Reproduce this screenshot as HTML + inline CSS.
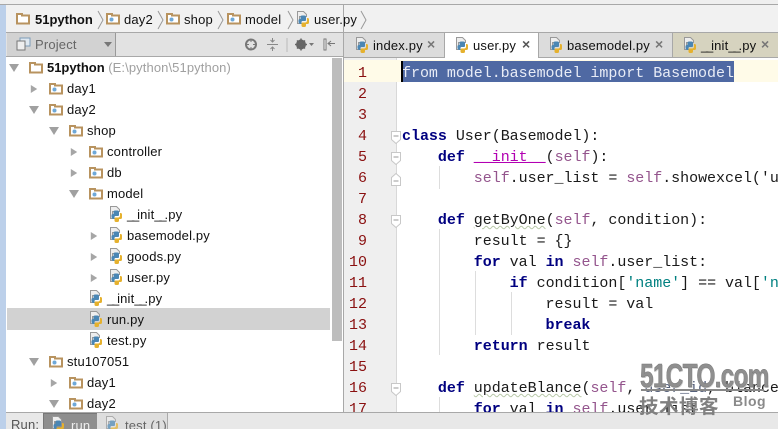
<!DOCTYPE html>
<html><head><meta charset="utf-8"><style>
html,body{margin:0;padding:0;background:#fff}
#p{position:relative;width:778px;height:429px;overflow:hidden;background:#fff;font:13px "Liberation Sans",sans-serif;color:#111;letter-spacing:.17px}
#p div,#p svg{position:absolute}
.t{height:21px;line-height:21px;white-space:nowrap}
.c{position:absolute;left:402px;height:21px;line-height:21px;white-space:pre;font:15px/21px "Liberation Mono",monospace;color:#1a1a1a;letter-spacing:-.03px}
.n{position:absolute;left:344px;width:23px;text-align:right;font:15px/21px "Liberation Mono",monospace;letter-spacing:0;color:#8a1010}
.k{color:#000080;font-weight:bold}
.s{color:#94558d}
.q{color:#008080}
.m{color:#b200b2;text-decoration:underline}
.w{text-decoration:underline wavy #b8c8a8 1px}
.x{color:#777;font-weight:bold;font-size:14px}
.u{letter-spacing:-2.2px}
</style></head><body><div id="p">
<svg width="0" height="0" style="position:absolute"><defs>
<symbol id="py" viewBox="0 0 12 16"><path d="M.5.500h6l3 3v2H2.500v7h-2z" fill="#eee" stroke="#999"/><path d="M3.500 8V6q0-1.500 1.500-1.500h2.500Q9 4.500 9 6v3q0 1-1 1H5.500q-1 0-1 1v2H3q-1.500-.5-1.500-2.500V9.500Q1.500 8 3 8z" fill="#4a86b4"/><path d="M10 7h.5Q12 7 12 8.500v3Q12 13 10.500 13H9v1.500Q9 16 7.500 16H6q-1.500 0-1.500-1.500v-2q0-1 1-1H8q2 0 2-2z" fill="#e5b12e"/></symbol>
<symbol id="fo" viewBox="0 0 14 14"><path d="M1 3h5v1.500h7v8H1z" fill="#fff" stroke="#b8935f" stroke-width="2"/><circle cx="5.500" cy="8.500" r="2" fill="#6ea8d8"/></symbol>
<symbol id="fp" viewBox="0 0 14 14"><path d="M1 3h5v1.500h7v8H1z" fill="#fff" stroke="#b8935f" stroke-width="2"/></symbol>
<symbol id="ar" viewBox="0 0 10 10"><path d="M1 0l8 5-8 5z" fill="#a6a6a6"/></symbol>
<symbol id="ad" viewBox="0 0 10 10"><path d="M0 1h10L5 9z" fill="#a0a0a0"/></symbol>
<symbol id="fd" viewBox="0 0 10 13"><path d="M.5.500h9v8L5 12.500.5 8.500z" fill="#fff" stroke="#c8c8c8"/><path d="M2.500 5h5" stroke="#999"/></symbol>
</defs></svg>

<div style="left:0;top:0;width:778px;height:4px;background:#efefef;border-bottom:1px solid #a8a8a8"></div>
<div style="left:0;top:5px;width:6px;height:424px;background:#bcd0ea"></div>
<div style="left:6px;top:5px;width:772px;height:27px;background:#f1f1f1;border-bottom:1px solid #a8a8a8"></div>

<!-- breadcrumb -->
<svg style="left:16px;top:11px" width="14" height="14"><use href="#fp"/></svg>
<div class="t" style="left:35px;top:9px;font-weight:bold;letter-spacing:0">51python</div>
<svg style="left:97px;top:10px" width="8" height="20"><path d="M1 1l5 9-5 9" fill="none" stroke="#999"/></svg>
<svg style="left:106px;top:11px" width="14" height="14"><use href="#fo"/></svg>
<div class="t" style="left:124px;top:9px">day2</div>
<svg style="left:157px;top:10px" width="8" height="20"><path d="M1 1l5 9-5 9" fill="none" stroke="#999"/></svg>
<svg style="left:166px;top:11px" width="14" height="14"><use href="#fo"/></svg>
<div class="t" style="left:184px;top:9px">shop</div>
<svg style="left:217px;top:10px" width="8" height="20"><path d="M1 1l5 9-5 9" fill="none" stroke="#999"/></svg>
<svg style="left:227px;top:11px" width="14" height="14"><use href="#fo"/></svg>
<div class="t" style="left:245px;top:9px">model</div>
<svg style="left:287px;top:10px" width="8" height="20"><path d="M1 1l5 9-5 9" fill="none" stroke="#999"/></svg>
<svg style="left:297px;top:11px" width="12" height="16"><use href="#py"/></svg>
<div class="t" style="left:314px;top:9px">user.py</div>
<svg style="left:360px;top:10px" width="8" height="20"><path d="M1 1l5 9-5 9" fill="none" stroke="#999"/></svg>

<!-- project toolbar -->
<div style="left:6px;top:33px;width:337px;height:23px;background:#e2e2e2;border-bottom:1px solid #a8a8a8"></div>
<div style="left:7px;top:33px;width:108px;height:23px;background:#d2d2d2;border-right:1px solid #999"></div>
<svg style="left:16px;top:37px" width="15" height="14"><rect x="4" y="1" width="10" height="8" fill="#dfe8f0" stroke="#7c9cb8"/><rect x="1" y="4" width="8" height="9" fill="#eee" stroke="#777"/></svg>
<div class="t" style="left:35px;top:34px;color:#666">Project</div>
<svg style="left:104px;top:42px" width="8" height="5"><path d="M0 0h8L4 5z" fill="#777"/></svg>
<svg style="left:244px;top:37px" width="100" height="16"><circle cx="7" cy="7.500" r="5" fill="none" stroke="#777" stroke-width="2"/><path d="M7 2v3M7 10v3M2 7.500h3M9 7.500h3" stroke="#777"/>
<path d="M23 7.500h11M28.500 1v4M28.500 10v4M26.500 3l2 2 2-2M26.500 12l2-2 2 2" stroke="#888" fill="none"/>
<path d="M43 1v14" stroke="#bbb"/>
<circle cx="57" cy="7.500" r="3.500" fill="none" stroke="#666" stroke-width="3"/><path d="M57 1.500v12M51 7.500h12M53 3.500l8 8M61 3.500l-8 8" stroke="#666" stroke-width="1.500"/><path d="M65 6h5l-2.500 3z" fill="#777"/>
<path d="M80 2h2v11h-2z" fill="#fff" stroke="#777"/><path d="M91 6.500h-7M87 4l-3 2.500 3 2.500" stroke="#777" fill="none"/></svg>

<!-- tree -->
<div style="left:7px;top:308px;width:323px;height:22px;background:#d2d2d2"></div>
<div style="left:332px;top:58px;width:10px;height:283px;background:#bdbdbd"></div>

<svg style="left:9px;top:63px" width="10" height="10"><use href="#ad"/></svg>
<svg style="left:29px;top:60px" width="14" height="14"><use href="#fp"/></svg>
<div class="t" style="left:47px;top:57px;font-weight:bold;letter-spacing:-.02px">51python <span style="font-weight:normal;color:#a0a0a0;letter-spacing:.1px">(E:\python\51python)</span></div>

<svg style="left:30px;top:84px" width="8" height="10"><use href="#ar"/></svg>
<svg style="left:49px;top:81px" width="14" height="14"><use href="#fo"/></svg>
<div class="t" style="left:67px;top:78px">day1</div>

<svg style="left:29px;top:105px" width="10" height="10"><use href="#ad"/></svg>
<svg style="left:49px;top:102px" width="14" height="14"><use href="#fo"/></svg>
<div class="t" style="left:67px;top:99px">day2</div>

<svg style="left:49px;top:126px" width="10" height="10"><use href="#ad"/></svg>
<svg style="left:69px;top:123px" width="14" height="14"><use href="#fo"/></svg>
<div class="t" style="left:87px;top:120px">shop</div>

<svg style="left:70px;top:147px" width="8" height="10"><use href="#ar"/></svg>
<svg style="left:89px;top:144px" width="14" height="14"><use href="#fo"/></svg>
<div class="t" style="left:107px;top:141px">controller</div>

<svg style="left:70px;top:168px" width="8" height="10"><use href="#ar"/></svg>
<svg style="left:89px;top:165px" width="14" height="14"><use href="#fo"/></svg>
<div class="t" style="left:107px;top:162px">db</div>

<svg style="left:69px;top:189px" width="10" height="10"><use href="#ad"/></svg>
<svg style="left:89px;top:186px" width="14" height="14"><use href="#fo"/></svg>
<div class="t" style="left:107px;top:183px">model</div>

<svg style="left:110px;top:206px" width="12" height="16"><use href="#py"/></svg>
<div class="t" style="left:127px;top:204px"><span class="u">__</span>init<span class="u">__</span>.py</div>

<svg style="left:90px;top:231px" width="8" height="10"><use href="#ar"/></svg>
<svg style="left:110px;top:227px" width="12" height="16"><use href="#py"/></svg>
<div class="t" style="left:127px;top:225px">basemodel.py</div>

<svg style="left:90px;top:252px" width="8" height="10"><use href="#ar"/></svg>
<svg style="left:110px;top:248px" width="12" height="16"><use href="#py"/></svg>
<div class="t" style="left:127px;top:246px">goods.py</div>

<svg style="left:90px;top:273px" width="8" height="10"><use href="#ar"/></svg>
<svg style="left:110px;top:269px" width="12" height="16"><use href="#py"/></svg>
<div class="t" style="left:127px;top:267px">user.py</div>

<svg style="left:90px;top:290px" width="12" height="16"><use href="#py"/></svg>
<div class="t" style="left:107px;top:288px"><span class="u">__</span>init<span class="u">__</span>.py</div>

<svg style="left:90px;top:311px" width="12" height="16"><use href="#py"/></svg>
<div class="t" style="left:107px;top:309px">run.py</div>

<svg style="left:90px;top:332px" width="12" height="16"><use href="#py"/></svg>
<div class="t" style="left:107px;top:330px">test.py</div>

<svg style="left:29px;top:357px" width="10" height="10"><use href="#ad"/></svg>
<svg style="left:49px;top:354px" width="14" height="14"><use href="#fo"/></svg>
<div class="t" style="left:67px;top:351px">stu107051</div>

<svg style="left:50px;top:378px" width="8" height="10"><use href="#ar"/></svg>
<svg style="left:69px;top:375px" width="14" height="14"><use href="#fo"/></svg>
<div class="t" style="left:87px;top:372px">day1</div>

<svg style="left:49px;top:399px" width="10" height="10"><use href="#ad"/></svg>
<svg style="left:69px;top:396px" width="14" height="14"><use href="#fo"/></svg>
<div class="t" style="left:87px;top:393px">day2</div>

<!-- tabs -->
<div style="left:344px;top:33px;width:434px;height:24px;background:#dcdcdc;border-bottom:1px solid #a8a8a8"></div>
<div style="left:343px;top:5px;width:1px;height:407px;background:#a8a8a8"></div>
<div style="left:444px;top:33px;width:93px;height:25px;background:#fff;border-left:1px solid #a8a8a8;border-right:1px solid #a8a8a8"></div>
<div style="left:672px;top:33px;width:106px;height:24px;background:#d6d3bf;border-left:1px solid #a8a8a8"></div>
<svg style="left:356px;top:37px" width="12" height="16"><use href="#py"/></svg>
<div class="t" style="left:373px;top:35px">index.py</div>
<div class="t x" style="left:427px;top:34px">×</div>
<svg style="left:456px;top:37px" width="12" height="16"><use href="#py"/></svg>
<div class="t" style="left:473px;top:35px">user.py</div>
<div class="t x" style="left:522px;top:34px;color:#555">×</div>
<svg style="left:550px;top:37px" width="12" height="16"><use href="#py"/></svg>
<div class="t" style="left:567px;top:35px">basemodel.py</div>
<div class="t x" style="left:655px;top:34px">×</div>
<svg style="left:684px;top:37px" width="12" height="16"><use href="#py"/></svg>
<div class="t" style="left:701px;top:35px"><span class="u">__</span>init<span class="u">__</span>.py</div>
<div class="t x" style="left:761px;top:34px">×</div>

<!-- editor -->
<div style="left:344px;top:58px;width:52px;height:354px;background:#efefef;border-right:1px solid #d8d8d8"></div>
<div style="left:344px;top:60px;width:434px;height:22px;background:#fffbe8"></div>
<div style="left:401px;top:61px;width:333px;height:21px;background:#4f69a3"></div>
<div style="left:401px;top:61px;width:2px;height:21px;background:#000"></div>

<div style="left:439px;top:166px;width:1px;height:23px;background:#ddd"></div>
<div style="left:439px;top:229px;width:1px;height:126px;background:#ddd"></div>
<div style="left:475px;top:271px;width:1px;height:64px;background:#ddd"></div>
<div style="left:511px;top:292px;width:1px;height:43px;background:#ddd"></div>
<div style="left:439px;top:397px;width:1px;height:15px;background:#ddd"></div>

<svg style="left:391px;top:131px" width="10" height="13"><use href="#fd"/></svg>
<svg style="left:391px;top:152px" width="10" height="13"><use href="#fd"/></svg>
<svg style="left:391px;top:173px;transform:scaleY(-1)" width="10" height="13"><use href="#fd"/></svg>
<svg style="left:391px;top:215px" width="10" height="13"><use href="#fd"/></svg>
<svg style="left:391px;top:383px" width="10" height="13"><use href="#fd"/></svg>

<span class="n" style="top:63px">1</span><span class="n" style="top:84px">2</span><span class="n" style="top:105px">3</span><span class="n" style="top:126px">4</span><span class="n" style="top:147px">5</span><span class="n" style="top:168px">6</span><span class="n" style="top:189px">7</span><span class="n" style="top:210px">8</span><span class="n" style="top:231px">9</span><span class="n" style="top:252px">10</span><span class="n" style="top:273px">11</span><span class="n" style="top:294px">12</span><span class="n" style="top:315px">13</span><span class="n" style="top:336px">14</span><span class="n" style="top:357px">15</span><span class="n" style="top:378px">16</span><span class="n" style="top:399px">17</span>

<span class="c" style="top:63px;color:#e8ecf6">from model.basemodel import Basemodel</span>
<span class="c" style="top:126px"><span class="k">class</span> User(Basemodel):</span>
<span class="c" style="top:147px">    <span class="k">def</span> <span class="m">__init__</span>(<span class="s">self</span>):</span>
<span class="c" style="top:168px">        <span class="s">self</span>.user_list = <span class="s">self</span>.showexcel('u</span>
<span class="c" style="top:210px">    <span class="k">def</span> <span class="w">getByOne</span>(<span class="s">self</span>, condition):</span>
<span class="c" style="top:231px">        result = {}</span>
<span class="c" style="top:252px">        <span class="k">for</span> val <span class="k">in</span> <span class="s">self</span>.user_list:</span>
<span class="c" style="top:273px">            <span class="k">if</span> condition[<span class="q">'name'</span>] == val[<span class="q">'n</span></span>
<span class="c" style="top:294px">                result = val</span>
<span class="c" style="top:315px">                <span class="k">break</span></span>
<span class="c" style="top:336px">        <span class="k">return</span> result</span>
<span class="c" style="top:378px">    <span class="k">def</span> <span class="w">updateBlance</span>(<span class="s">self</span>, <span style="color:#55607a">user_id</span>, blance</span>
<span class="c" style="top:399px">        <span class="k">for</span> val <span class="k">in</span> <span class="s">self</span>.user_list</span>

<!-- bottom bar -->
<div style="left:6px;top:412px;width:772px;height:17px;background:#e8e8e8;border-top:1px solid #a8a8a8"></div>
<div class="t" style="left:11px;top:414px;color:#555">Run:</div>
<div style="left:43px;top:413px;width:53px;height:16px;background:#8e8e8e;border:1px solid #777;border-bottom:0"></div>
<svg style="left:52px;top:416px" width="12" height="16"><use href="#py"/></svg>
<div class="t" style="left:71px;top:415px;color:#eee">run</div>
<div style="left:97px;top:413px;width:70px;height:16px;background:#dedede;border-right:1px solid #aaa"></div>
<svg style="left:106px;top:416px;opacity:.7" width="12" height="16"><use href="#py"/></svg>
<div class="t" style="left:125px;top:415px;color:#666">test (1)</div>

<!-- watermark -->
<div class="t" style="left:640px;top:358px;height:36px;font:bold 33px/36px 'Liberation Sans',sans-serif;color:#8f8f8f;letter-spacing:-1px;-webkit-text-stroke:.5px #777;transform:scaleX(.74);transform-origin:left center;text-shadow:1px 1px 0 #ccc">51CTO.com</div>
<div style="left:641px;top:389px;width:123px;height:2px;background:#888"></div>
<div class="t" style="left:639px;top:393px;height:24px;font:bold 19.500px/24px 'Noto Sans CJK SC',sans-serif;color:#808080;letter-spacing:.5px">技术博客</div>
<div class="t" style="left:733px;top:392px;height:18px;font:bold 14px/18px 'Liberation Sans',sans-serif;color:#8a8a8a;letter-spacing:.5px">Blog</div>
</div></body></html>
